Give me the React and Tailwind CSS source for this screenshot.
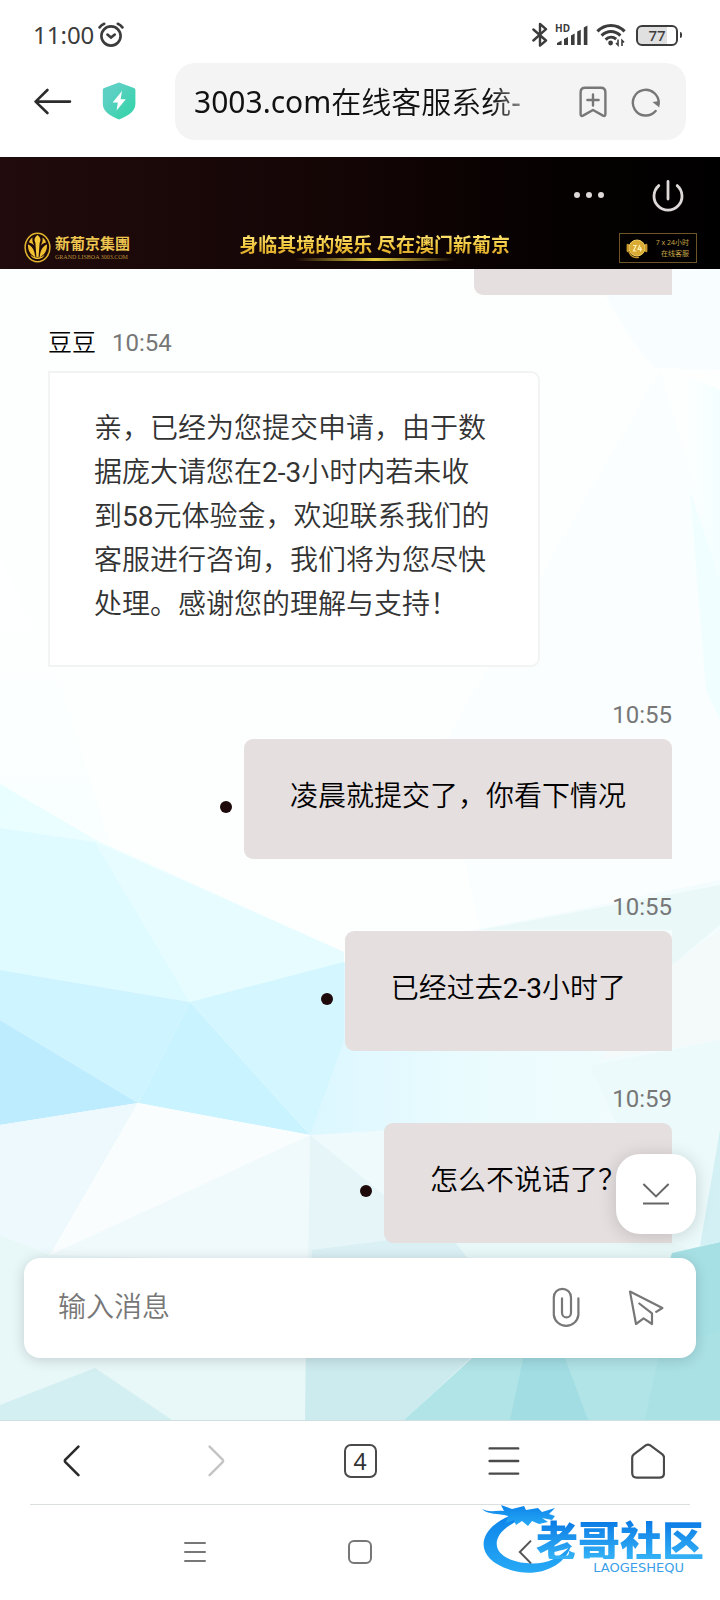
import React, { useState } from "react";

const sentMessages = [
  { id: 1, time: "10:55", text: "凌晨就提交了，你看下情况" },
  { id: 2, time: "10:55", text: "已经过去2-3小时了" },
  { id: 3, time: "10:59", text: "怎么不说话了？" },
];

const StatusBar = () => (
  <div className="flex h-[62px] items-center justify-between pt-[8px] pr-[38px] pl-[33px] text-[#3c3c3c]">
    <div className="flex items-center gap-[4px]">
      <span className="font-['Noto_Sans',sans-serif] text-[24px] leading-[28px]">11:00</span>
      <svg width="26" height="26" viewBox="0 0 26 26" fill="none" stroke="currentColor" strokeWidth="2.6" strokeLinecap="round">
        <circle cx="13" cy="14" r="9.6" />
        <path d="M1.6 5.4 C2.8 3.8 4.4 2.6 6.2 1.8 M24.4 5.4 C23.2 3.8 21.6 2.6 19.8 1.8" strokeWidth="2.6" />
        <path d="M9.4 12.6 L13 15.6 L16.8 12.6" />
      </svg>
    </div>
    <div className="flex items-center">
      <svg width="16" height="26" viewBox="0 0 16 26" fill="none" stroke="currentColor" strokeWidth="2.4" strokeLinejoin="round" strokeLinecap="round">
        <path d="M1.4 7.5 L14 18.5 L8 23.6 V2 L14 7.2 L1.4 18.5" />
      </svg>
      <div className="relative ml-[7px] h-[24px] w-[34px]">
        <span className="absolute top-0 left-0 font-['Noto_Sans',sans-serif] text-[10px] leading-[10px] font-bold">HD</span>
        <svg className="absolute inset-0" width="34" height="24" viewBox="0 0 34 24" fill="currentColor">
          <path d="M2 22 V20 L6.6 17.6 V22Z" />
          <path d="M9 22 V16 L13 14 V22Z" />
          <path d="M16 22 V12.4 L19.6 10.6 V22Z" />
          <path d="M22.2 22 V8.6 L25.8 6.8 V22Z" />
          <path d="M28.8 22 V4.4 L32.4 2.6 V22Z" />
        </svg>
      </div>
      <svg className="ml-[7px]" width="30" height="24" viewBox="0 0 30 24" fill="none" stroke="currentColor" strokeWidth="3">
        <path d="M1.4 8.4 C9 0.4 21 0.4 28.6 8.4" />
        <path d="M5.6 12.6 C11 7 19 7 24.4 12.6" />
        <path d="M9.6 16.6 C12.8 13.4 17 13.4 20.2 16.2" />
        <circle cx="14.6" cy="20" r="2.4" fill="currentColor" stroke="none" />
        <path d="M22 16.5 V22 L20 20 M26 23 V17.4 L28 19.4" strokeWidth="1.6" />
      </svg>
      <div className="ml-[10px] flex items-center">
        <div className="flex h-[21px] w-[42px] items-center justify-center rounded-[6px] border-[2px] border-[#3c3c3c] bg-linear-to-r from-[#e0e0e0] from-75% to-white to-75% font-['Noto_Sans',sans-serif] text-[15px] leading-[15px] font-medium">
          77
        </div>
        <div className="ml-[2px] h-[6px] w-[2px] rounded-r bg-[#3c3c3c]" />
      </div>
    </div>
  </div>
);

const AddressBar = () => (
  <div className="flex h-[95px] items-start pr-[34px] pl-[34px]">
    <button aria-label="返回" className="mt-[26px] h-[28px] w-[38px]">
      <svg width="38" height="28" viewBox="0 0 38 28" fill="none" stroke="#2c2c2c" strokeWidth="2.6" strokeLinecap="round" strokeLinejoin="round">
        <path d="M13.4 2 L1.6 13.6 L13.4 25 M1.6 13.6 H36" />
      </svg>
    </button>
    <svg className="mt-[20px] ml-[30px]" width="34" height="38" viewBox="0 0 34 38">
      <defs>
        <linearGradient id="shield" x1="0" y1="0" x2="1" y2="1">
          <stop offset="0.3" stopColor="#5bd0c3" />
          <stop offset="0.75" stopColor="#3dd3ae" />
        </linearGradient>
      </defs>
      <path d="M17 0.5 L32 6 Q33.4 6.6 33.4 8 V22 C33.4 30 25 34 17 37.6 C9 34 0.8 30 0.8 22 V8 Q0.8 6.6 2.2 6Z" fill="url(#shield)" />
      <path d="M20 9 L10.6 20.4 H15.8 L14.6 28.6 L23.8 17.2 H18.6Z" fill="#fff" />
    </svg>
    <div className="mt-[1px] ml-[39px] flex h-[77px] min-w-0 flex-1 items-center rounded-[20px] bg-[#f4f4f4] pr-[25px] pl-[19px]">
      <div className="min-w-0 flex-1 overflow-hidden bg-linear-to-r from-[#111] from-88% to-[#bbb] bg-clip-text font-['Noto_Sans','Noto_Sans_CJK_SC_DemiLight','Noto_Sans_CJK_SC',sans-serif] text-[30px] leading-[40px] whitespace-nowrap text-transparent">
        3003.com在线客服系统-
      </div>
      <button aria-label="收藏" className="ml-[48px] h-[32px] w-[28px]">
        <svg width="28" height="32" viewBox="0 0 28 32" fill="none" stroke="#777" strokeWidth="2.4" strokeLinejoin="round" strokeLinecap="round">
          <path d="M1.6 6.4 Q1.6 1.8 6.2 1.8 H21.8 Q26.4 1.8 26.4 6.4 V28 Q26.4 30.8 24 29.6 L14 24 L4 29.6 Q1.6 30.8 1.6 28Z" />
          <path d="M14 8.4 V19.6 M8.4 14 H19.6" />
        </svg>
      </button>
      <button aria-label="刷新" className="ml-[24px] h-[30px] w-[30px]">
        <svg width="30" height="30" viewBox="0 0 30 30" fill="none" stroke="#777" strokeWidth="2.4" strokeLinecap="round">
          <path d="M24.6 24 A12.9 12.9 0 1 1 27.6 17" />
          <path d="M21.4 15 L28.4 14 L28.4 20.4Z" fill="#777" stroke="none" />
        </svg>
      </button>
    </div>
  </div>
);

const Banner = () => (
  <header className="flex h-[112px] flex-col justify-between bg-linear-to-r from-[#210b0c] via-[#130505] to-[#010000] pr-[23px] pl-[24px]">
    <div className="flex items-center justify-end gap-[47px] pt-[21px] pr-[12px]">
      <button aria-label="更多" className="flex gap-[6px]">
        <span className="h-[6px] w-[6px] rounded-full bg-[#ded8d8]" />
        <span className="h-[6px] w-[6px] rounded-full bg-[#ded8d8]" />
        <span className="h-[6px] w-[6px] rounded-full bg-[#ded8d8]" />
      </button>
      <button aria-label="退出" className="h-[34px] w-[34px]">
        <svg width="34" height="34" viewBox="0 0 34 34" fill="none" stroke="#ded8d8" strokeWidth="2.8" strokeLinecap="round">
          <path d="M17 3.4 V21" />
          <path d="M7.8 7.6 A14 14 0 1 0 26.2 7.6" />
        </svg>
      </button>
    </div>
    <div className="flex items-center justify-between pb-[6px]">
      <div className="flex items-center gap-[4px]">
        <svg width="27" height="31" viewBox="0 0 27 31" fill="none">
          <ellipse cx="13.5" cy="15.5" rx="12.4" ry="14.2" stroke="#e0b52e" strokeWidth="1.5" />
          <path d="M13.5 3 C17 6 17 8 15.6 11 L14.6 25 H12.4 L11.4 11 C10 8 10 6 13.5 3Z" fill="#f5c93a" />
          <path d="M10.6 25 C6 22 3.6 18 4 12.6 C8 14 10.4 18 11.4 25Z M16.4 25 C21 22 23.4 18 23 12.6 C19 14 16.6 18 15.6 25Z" fill="#f0c030" />
          <path d="M10.4 13.5 C8.4 10.6 8 8 8.6 5.6 C6.6 7 5.4 8.6 5 10.4 C7.4 11 9 12 10.4 13.5Z M16.6 13.5 C18.6 10.6 19 8 18.4 5.6 C20.4 7 21.6 8.6 22 10.4 C19.6 11 18 12 16.6 13.5Z" fill="#f0c030" />
          <path d="M6.4 22.6 C9 26.6 18 26.6 20.6 22.6 C19 28.6 8 28.6 6.4 22.6Z" fill="#f0c030" />
        </svg>
        <div className="font-['Liberation_Serif','Noto_Sans_CJK_TC',serif] whitespace-nowrap text-[#edc650]">
          <div className="text-[15px] leading-[18px] font-bold">新葡京集團</div>
          <div className="text-[6px] leading-[8px] text-[#b98f35]">GRAND LISBOA 3003.COM</div>
        </div>
      </div>
      <div className="flex flex-col items-center">
        <div className="bg-linear-to-b from-[#ffe875] via-[#f0c53a] to-[#d09a22] bg-clip-text font-['Liberation_Serif','Noto_Sans_CJK_SC',serif] text-[19px] leading-[24px] font-bold whitespace-nowrap text-transparent">
          身临其境的娱乐 尽在澳门新葡京
        </div>
        <div className="h-[3px] w-[160px] bg-linear-to-r from-transparent via-[#e6cc3c] to-transparent" />
      </div>
      <div className="flex h-[30px] w-[78px] items-center justify-between border border-[#6d5527] pr-[7px] pl-[6px]">
        <svg width="22" height="22" viewBox="0 0 22 22" fill="none">
          <circle cx="11" cy="11" r="8" fill="#d9ab35" stroke="#f0d060" strokeWidth="1" />
          <path d="M1.8 8 V14 M20.2 8 V14" stroke="#c9982c" strokeWidth="2.4" strokeLinecap="round" />
          <path d="M3 15 C5 20 9 21 13 20.4" stroke="#c9982c" strokeWidth="1.4" />
          <path d="M7 8.5 H10 L7.4 14 H10.4 M14 8 L12 12.4 H16 M14.6 10 V14.6" stroke="#fff0b0" strokeWidth="1.2" />
        </svg>
        <div className="text-right font-['Noto_Sans','Noto_Sans_CJK_SC',sans-serif] text-[7px] leading-[11px] whitespace-nowrap text-[#c5a248]">
          <div>7 x 24小时</div>
          <div>在线客服</div>
        </div>
      </div>
    </div>
  </header>
);

// low-poly backdrop of the chat
const Backdrop = () => (
  <svg className="absolute inset-0 h-full w-full" viewBox="0 269 720 1151" preserveAspectRatio="none" aria-hidden="true">
    <defs>
      <linearGradient id="leftFade" x1="0" y1="0" x2="1" y2="1">
        <stop offset="0" stopColor="#e9feff" />
        <stop offset="1" stopColor="#f2fdff" />
      </linearGradient>
      <linearGradient id="upperFade" x1="0" y1="0" x2="0" y2="1">
        <stop offset="0" stopColor="#fff" />
        <stop offset="1" stopColor="#f8fffe" />
      </linearGradient>
      <linearGradient id="midFade" x1="0" y1="0" x2="1" y2="0">
        <stop offset="0" stopColor="#dcf7ff" />
        <stop offset="0.4" stopColor="#eafbfe" />
        <stop offset="1" stopColor="#f4fcfd" />
      </linearGradient>
      <linearGradient id="rightFade" x1="0" y1="0" x2="1" y2="0">
        <stop offset="0" stopColor="#fff" stopOpacity="0" />
        <stop offset="1" stopColor="#f3feff" />
      </linearGradient>
    </defs>
    <rect y="269" width="720" height="1151" fill="#fdfffe" />
    <polygon points="590,269 720,269 720,370 655,368 632,340" fill="#f8feff" />
    <polygon points="660,370 705,520 720,690 720,900 480,930 440,750" fill="#fafeff" />
    <polygon points="660,365 720,390 720,640 705,640" fill="url(#rightFade)" />
    <polygon points="690,490 720,580 720,720 706,690" fill="#f1feff" />
    <polygon points="0,560 60,680 110,845 0,785" fill="url(#upperFade)" />
    <polygon points="0,784 100,842 344,952 344,965 190,1002 0,970" fill="url(#leftFade)" />
    <polygon points="0,828 95,842 190,1002 0,970" fill="#e0fbff" />
    <polygon points="95,842 344,952 344,965 190,1002" fill="#e6fcff" />
    <polygon points="344,962 480,930 720,880 720,1250 310,1135" fill="url(#midFade)" />
    <polygon points="344,955 500,925 672,890 672,960" fill="#f4fcfd" />
    <polygon points="480,930 720,885 720,925 672,965 672,930" fill="#eaf8f8" />
    <polygon points="720,930 672,965 600,1060 720,1040" fill="#f4f9fa" />
    <polygon points="590,1066 720,1040 720,1250 672,1250 615,1120" fill="#ecfafb" />
    <polygon points="0,970 190,1002 138,1103 0,1020" fill="#cdf4ff" />
    <polygon points="190,1002 310,1135 138,1103" fill="#c9f3ff" />
    <polygon points="190,1002 344,962 344,1040 310,1135" fill="#d3f6ff" />
    <polygon points="0,1020 138,1103 0,1125" fill="#bdecff" />
    <polygon points="0,1125 138,1103 50,1255 0,1235" fill="#edf9fd" />
    <polygon points="138,1103 310,1135 50,1255" fill="#f9fdfe" />
    <polygon points="310,1135 312,1300 50,1300 50,1255" fill="#f0f9fb" />
    <polygon points="0,1235 50,1255 312,1262 306,1420 0,1420" fill="#e8f7f8" />
    <polygon points="310,1135 400,1180 460,1240 480,1360 404,1420 306,1420" fill="#e6f6f8" />
    <polygon points="310,1135 390,1130 390,1200" fill="#eefafc" />
    <polygon points="390,1240 455,1240 500,1300 312,1300 312,1250" fill="#daf0f4" />
    <polygon points="455,1242 672,1242 690,1250 610,1290 500,1300" fill="#e8f8f9" />
    <polygon points="672,1253 720,1242 720,1420 620,1420" fill="#a6e0e5" />
    <polygon points="720,1130 700,1246 720,1242" fill="#d3f1f4" />
    <polygon points="306,1340 490,1340 404,1420 305,1420" fill="#ccebef" />
    <polygon points="0,1405 95,1368 172,1420 0,1420" fill="#d3eff2" />
    <polygon points="472,1358 490,1340 720,1340 720,1420 404,1420" fill="#b0e4e7" />
    <polygon points="525,1350 562,1350 588,1420 510,1420" fill="#a2dde4" />
    <polygon points="660,1350 720,1330 720,1420 645,1420" fill="#a9e1e5" />
  </svg>
);

const SentMessage = ({ message }) => (
  <div className="mt-[34px] flex flex-col items-end">
    <time className="mb-[10px] text-[24px] leading-[28px] text-[#777]">{message.time}</time>
    <div className="flex items-center gap-[12px]">
      <span className="mt-[16px] h-[12px] w-[12px] rounded-full bg-[#1f0a0b]" />
      <p className="rounded-[9px] rounded-br-none bg-[#e5dfdf] px-[46px] pt-[36px] pb-[40px] text-[28px] leading-[44px] text-black">
        {message.text}
      </p>
    </div>
  </div>
);

const Composer = ({ value, onChange }) => (
  <form
    className="relative mx-[24px] mt-[15px] flex h-[100px] items-center rounded-[16px] bg-white pr-[32px] pl-[34px] shadow-[0_2px_14px_rgba(0,0,0,0.16)]"
    onSubmit={(e) => e.preventDefault()}
  >
    <button type="button" aria-label="滚动到底部" className="absolute right-0 bottom-[124px] flex h-[80px] w-[80px] items-center justify-center rounded-[24px] bg-white shadow-[0_2px_18px_rgba(0,0,0,0.16)]">
      <svg width="28" height="24" viewBox="0 0 28 24" fill="none" stroke="#666" strokeWidth="2">
        <path d="M1.4 2 L14 14.4 L26.6 2 M1 21.4 H27" />
      </svg>
    </button>
    <input
      aria-label="输入消息"
      placeholder="输入消息"
      value={value}
      onChange={onChange}
      className="h-[44px] min-w-0 flex-1 text-[28px] leading-[44px] outline-none placeholder:text-[#777]"
    />
    <button type="button" aria-label="附件" className="h-[42px] w-[28px]">
      <svg width="28" height="42" viewBox="0 0 28 42" fill="none" stroke="#777" strokeWidth="2.2" strokeLinecap="round">
        <path d="M10 11.4 V25.4 A4.5 5 0 0 0 19 25.4 V10.4 A8.6 8.6 0 0 0 1.8 10.4 V28 A12.4 12.4 0 0 0 26.4 28 V11.4" />
      </svg>
    </button>
    <button type="submit" aria-label="发送" className="ml-[48px] h-[36px] w-[36px]">
      <svg width="36" height="36" viewBox="0 0 36 36" fill="none" stroke="#777" strokeWidth="2.2" strokeLinejoin="round">
        <path d="M27.4 22.4 L34.4 18 L2 1.6 L8 34 L15.6 28.4 L24 34 V23.4 L10.6 13" />
      </svg>
    </button>
  </form>
);

const BrowserToolbar = () => (
  <nav className="border-t border-[#cfdfe0] bg-white">
    <div className="grid h-[83px] grid-cols-5 place-items-center pb-[3px]">
      <button aria-label="后退">
        <svg width="18" height="32" viewBox="0 0 18 32" fill="none" stroke="#2b2b2b" strokeWidth="2.6" strokeLinecap="round" strokeLinejoin="round">
          <path d="M15.4 1.6 L2.4 14.6 Q1.4 16 2.4 17.2 L15.4 30.2" />
        </svg>
      </button>
      <button aria-label="前进">
        <svg width="18" height="32" viewBox="0 0 18 32" fill="none" stroke="#c4c4c4" strokeWidth="2.4" strokeLinecap="round" strokeLinejoin="round">
          <path d="M2.6 1.6 L15.6 14.6 Q16.6 16 15.6 17.2 L2.6 30.2" />
        </svg>
      </button>
      <button aria-label="标签页" className="flex h-[34px] w-[33px] items-center justify-center rounded-[7px] border-2 border-[#4a4a4a] font-['Noto_Sans',sans-serif] text-[23px] leading-[28px] text-[#333]">
        4
      </button>
      <button aria-label="菜单">
        <svg width="32" height="32" viewBox="0 0 32 32" stroke="#4a4a4a" strokeWidth="2.4" strokeLinecap="round">
          <path d="M1.6 3.4 H30.2 M1.6 16 H30.2 M1.6 28.6 H30.2" />
        </svg>
      </button>
      <button aria-label="主页">
        <svg width="34" height="36" viewBox="0 0 34 36" fill="none" stroke="#4a4a4a" strokeWidth="2.2" strokeLinejoin="round">
          <path d="M15 2.2 Q17 1 19 2.2 L31.4 11.4 Q33 12.8 33 14.6 V30 Q33 34.6 28.4 34.6 H5.6 Q1.2 34.6 1.2 30 V14.6 Q1.2 12.8 2.8 11.4Z" />
        </svg>
      </button>
    </div>
    <div className="mx-[30px] h-[1px] bg-[#dcdfe0]" />
  </nav>
);

const DragonLogo = () => (
  <div className="absolute top-0 right-[16px] h-[72px] w-[222px]">
    <svg className="absolute inset-0" width="222" height="72" viewBox="0 0 222 72">
      <defs>
        <linearGradient id="dragon" x1="0" y1="0" x2="0" y2="1">
          <stop offset="0" stopColor="#0d84ea" />
          <stop offset="1" stopColor="#27a9f5" />
        </linearGradient>
      </defs>
      <g fill="url(#dragon)">
        <path d="M30 10 C-8 24 -10 58 37 67 C60 71 84 60 89 40 C76 56 60 60 44 58 C6 54 6 28 38 15Z" />
        <path d="M0 4 C8 8 14 5 22 6 L19 0 L30 4 L42 1 L44 5 L56 3 L60 7 L73 3 L67 9 L73 11 L70 15 L60 13 L66 17 L57 19 L50 16 L46 21 L40 16 L34 20 L32 15 L24 18 L26 11 C16 8 6 10 0 4Z" />
      </g>
    </svg>
    <div className="absolute top-[14px] right-0 bg-linear-to-b from-[#0878e4] to-[#35b2f6] bg-clip-text font-['Noto_Sans_CJK_SC',sans-serif] text-[42px] leading-[40px] font-black whitespace-nowrap text-transparent">
      老哥社区
    </div>
    <div className="absolute top-[57px] right-[20px] font-['DejaVu_Sans',sans-serif] text-[13px] leading-[12px] text-[#3a9fe8]">
      LAOGESHEQU
    </div>
  </div>
);

const SystemNav = () => (
  <div className="relative h-[96px] bg-white px-[112px] pb-[2px]">
    <DragonLogo />
    <div className="relative grid h-full grid-cols-3 place-items-center">
      <button aria-label="最近任务">
        <svg width="24" height="24" viewBox="0 0 24 24" stroke="#777" strokeWidth="2" strokeLinecap="round">
          <path d="M2 3 H22 M2 12 H22 M2 21 H22" />
        </svg>
      </button>
      <button aria-label="主屏幕" className="h-[24px] w-[24px] rounded-[6px] border-2 border-[#777]" />
      <button aria-label="系统返回">
        <svg width="14" height="26" viewBox="0 0 14 26" fill="none" stroke="#555" strokeWidth="2">
          <path d="M13 1.6 L1.8 13 L13 24.4" />
        </svg>
      </button>
    </div>
  </div>
);

export default function App() {
  const [draft, setDraft] = useState("");

  return (
    <div className="min-h-screen overflow-hidden bg-white font-['Roboto','Noto_Sans_CJK_SC_DemiLight','Noto_Sans_CJK_SC',sans-serif]" lang="zh-CN">
      <StatusBar />
      <AddressBar />
      <Banner />
      <main className="relative overflow-hidden pb-[62px]">
        <Backdrop />
        <div className="relative px-[48px]">
          <div className="ml-auto h-[26px] w-[198px] rounded-bl-[9px] bg-[#e5dfdf]" />
          <div className="mt-[34px] mb-[14px] flex items-center gap-[16px] text-[24px] leading-[28px]">
            <span className="text-black">豆豆</span>
            <time className="text-[#777]">10:54</time>
          </div>
          <p className="max-w-[492px] rounded-r-[9px] border-2 border-[#f2f4f4] bg-white px-[44px] pt-[34px] pb-[38px] text-[28px] leading-[44px] text-[#333]">
            亲，已经为您提交申请，由于数据庞大请您在2-3小时内若未收到58元体验金，欢迎联系我们的客服进行咨询，我们将为您尽快处理。感谢您的理解与支持！
          </p>
          {sentMessages.map((message) => (
            <SentMessage key={message.id} message={message} />
          ))}
        </div>
        <Composer value={draft} onChange={(e) => setDraft(e.target.value)} />
      </main>
      <BrowserToolbar />
      <SystemNav />
    </div>
  );
}
